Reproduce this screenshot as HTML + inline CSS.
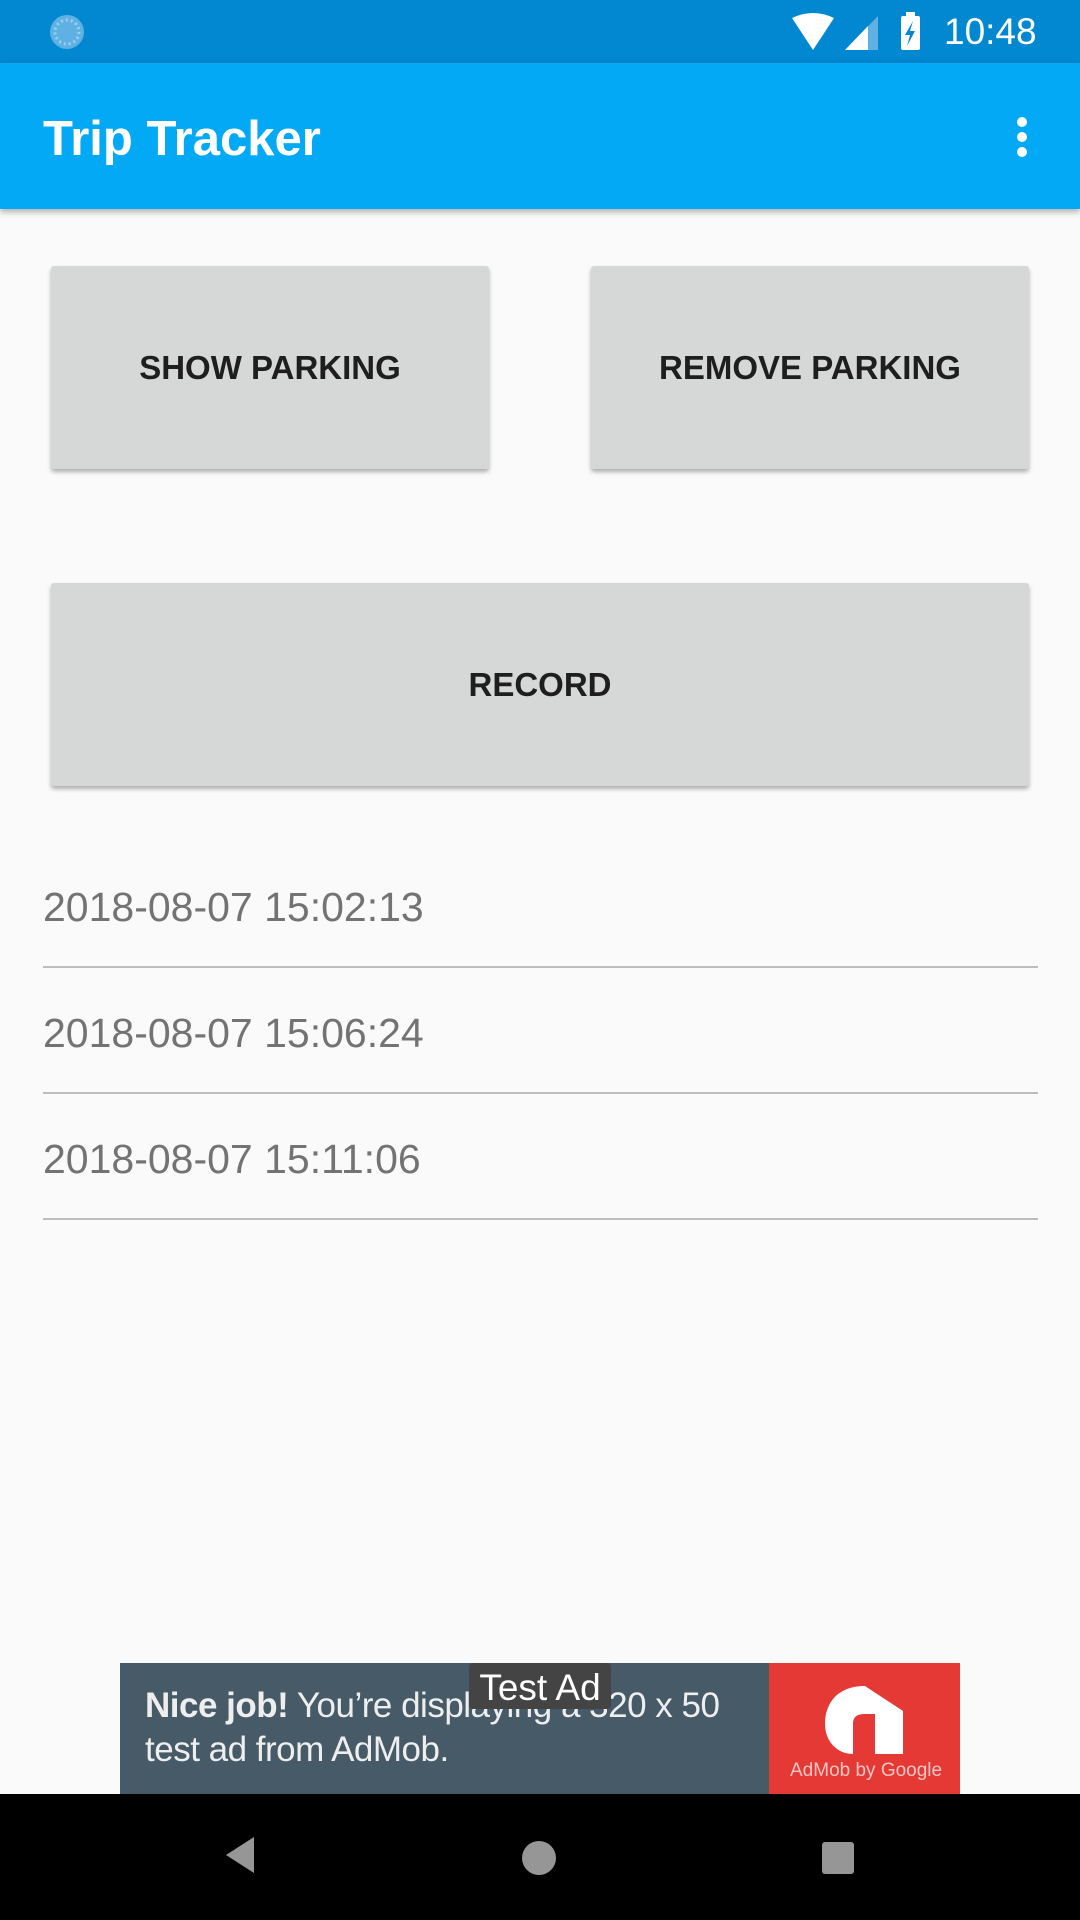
<!DOCTYPE html>
<html><head><meta charset="utf-8"><style>
body{margin:0;width:1080px;height:1920px;background:#fafafa;position:relative;overflow:hidden;font-family:"Liberation Sans",sans-serif}
.abs{position:absolute}
.btn{position:absolute;background:#d6d7d7;box-shadow:0 3px 4px rgba(0,0,0,.3);display:flex;align-items:center;justify-content:center;font-size:33px;font-weight:bold;color:#1e1e1e;border-radius:3px}
.item{position:absolute;left:43px;width:995px;height:124px;border-bottom:2px solid #bdbdbd;font-size:41px;color:#737373;box-sizing:border-box;padding-top:40px}
</style></head><body>
<div class="abs" style="left:0;top:0;width:1080px;height:63px;background:#0288d1"></div>
<svg class="abs" style="left:48px;top:13px" width="38" height="38"><circle cx="19" cy="19" r="17" fill="#5eb1e2"/><circle cx="19" cy="19" r="12" fill="none" stroke="#9dd0f0" stroke-width="3" stroke-dasharray="2 3"/></svg>
<svg class="abs" style="left:790px;top:12px" width="135" height="40">
<path d="M2 6 Q23 -4 44 6 L23 38 Z" fill="#fff"/>
<path d="M55 38 L88 4 L88 38 Z" fill="#5eb1e2"/><path d="M55 38 L78 14 L78 38 Z" fill="#fff"/>
<rect x="111" y="4" width="19" height="34" rx="2" fill="#fff"/><rect x="116" y="0" width="9" height="5" fill="#fff"/>
<path d="M123 9 L115 23 L120 23 L117 34 L125 19 L120 19 Z" fill="#0288d1"/></svg>
<div class="abs" style="left:944px;top:11px;font-size:37px;color:#fff">10:48</div>
<div class="abs" style="left:0;top:63px;width:1080px;height:146px;background:#03a9f4;box-shadow:0 3px 6px rgba(0,0,0,.3)"></div>
<div class="abs" style="left:43px;top:111px;font-size:49px;color:#fff;font-weight:bold">Trip Tracker</div>
<svg class="abs" style="left:1012px;top:116px" width="20" height="46"><circle cx="10" cy="6" r="5" fill="#fff"/><circle cx="10" cy="21" r="5" fill="#fff"/><circle cx="10" cy="36" r="5" fill="#fff"/></svg>
<div class="btn" style="left:51px;top:266px;width:438px;height:203px">SHOW PARKING</div>
<div class="btn" style="left:591px;top:266px;width:438px;height:203px">REMOVE PARKING</div>
<div class="btn" style="left:51px;top:583px;width:978px;height:203px">RECORD</div>
<div class="item" style="top:844px">2018-08-07 15:02:13</div>
<div class="item" style="top:970px">2018-08-07 15:06:24</div>
<div class="item" style="top:1096px">2018-08-07 15:11:06</div>
<div class="abs" style="left:120px;top:1663px;width:649px;height:131px;background:#475a67;overflow:hidden"></div>
<div class="abs" style="left:145px;top:1684px;font-size:35px;color:#eee;line-height:44px;letter-spacing:-0.5px;width:620px;white-space:nowrap;overflow:hidden"><b>Nice job!</b> You’re displaying a 320 x 50<br>test ad from AdMob.</div>
<div class="abs" style="left:469px;top:1663px;width:142px;height:46px;background:#444;border-radius:4px;color:#fff;font-size:37px;text-align:center;line-height:50px">Test Ad</div>
<div class="abs" style="left:769px;top:1663px;width:191px;height:131px;background:#e53935"></div>
<svg class="abs" style="left:825px;top:1686px" width="80" height="70"><path d="M40 0 C10 0 0 20 0 38 C0 55 12 68 28 68 L28 38 C28 30 33 28 40 28 L50 28 L50 68 L78 68 L78 25 Z" fill="#fff"/></svg>
<div class="abs" style="left:790px;top:1760px;font-size:19px;color:#f5c6c4">AdMob by Google</div>
<div class="abs" style="left:0;top:1794px;width:1080px;height:126px;background:#000"></div>
<svg class="abs" style="left:220px;top:1835px" width="40" height="40"><path d="M34 2 L34 38 L6 20 Z" fill="#969696"/></svg>
<div class="abs" style="left:522px;top:1841px;width:34px;height:34px;border-radius:50%;background:#969696"></div>
<div class="abs" style="left:822px;top:1842px;width:32px;height:32px;border-radius:3px;background:#969696"></div>
</body></html>
